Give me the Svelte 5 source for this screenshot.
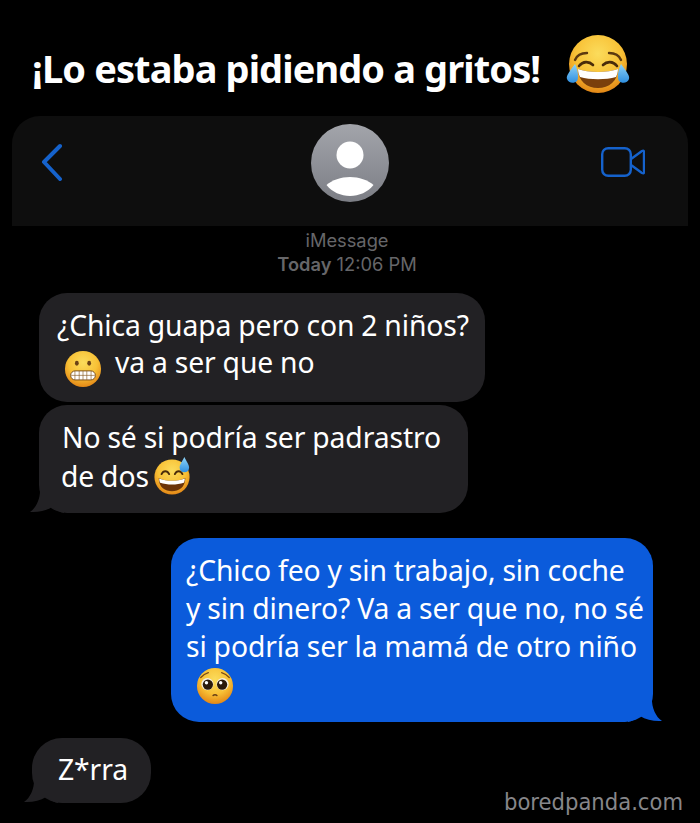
<svelte:options runes={true} />
<script>
  const bubbleTail = "M10 0 C10.500 10 6 19 0 23 C8 23.500 16 22 22 18 C25 20.500 29 23 34 24 L34 0 Z";
</script>

{#snippet defs()}
  <svg class="defs" width="0" height="0" aria-hidden="true">
    <defs>
      <radialGradient id="face" cx="50%" cy="32%" r="72%">
        <stop offset="0%" stop-color="#fbdc5c" />
        <stop offset="55%" stop-color="#f8c136" />
        <stop offset="100%" stop-color="#e07f12" />
      </radialGradient>
      <linearGradient id="tear" x1="0" y1="0" x2="0" y2="1">
        <stop offset="0%" stop-color="#8fd4f8" />
        <stop offset="100%" stop-color="#2f8fe0" />
      </linearGradient>
    </defs>
  </svg>
{/snippet}

<div class="page">
  {@render defs()}
  <header class="title">
    <h1>¡Lo estaba pidiendo a gritos!</h1>
    <svg class="e-joy" viewBox="0 0 64 60" aria-hidden="true">
      <circle cx="32" cy="29" r="29" fill="url(#face)" />
      <path d="M9 25 C11 20 15 18 21 18 M43 18 C49 18 53 20 55 25" fill="none" stroke="#5d3a10" stroke-width="2.400" stroke-linecap="round" />
      <path d="M13 31 C17 26 23 26 27 30 M37 30 C41 26 47 26 51 31" fill="none" stroke="#4a2c0a" stroke-width="2.600" stroke-linecap="round" />
      <path d="M12 34 C22 38 42 38 52 34 C52 46 43 53 32 53 C21 53 12 46 12 34 Z" fill="#7a3f0c" />
      <path d="M12 34 C22 38 42 38 52 34 C52 37 51 40 50 42 C40 45 24 45 14 42 C13 40 12 37 12 34 Z" fill="#fff" />
      <path d="M9 29 C3 37 0 41 1 44 C2 48 8 49 11 46 C13 43 12 35 9 29 Z" fill="url(#tear)" />
      <path d="M55 29 C61 37 64 41 63 44 C62 48 56 49 53 46 C51 43 52 35 55 29 Z" fill="url(#tear)" />
    </svg>
  </header>

  <section class="nav">
    <svg class="back" viewBox="0 0 24 38" aria-hidden="true">
      <path d="M20 3 L4 19 L20 36" fill="none" stroke="#1562cc" stroke-width="4" stroke-linecap="round" stroke-linejoin="round" />
    </svg>
    <svg class="avatar" viewBox="0 0 78 78" aria-hidden="true">
      <defs>
        <linearGradient id="av" x1="0" y1="0" x2="0" y2="1">
          <stop offset="0%" stop-color="#a3a5ab" />
          <stop offset="100%" stop-color="#7c7e85" />
        </linearGradient>
      </defs>
      <circle cx="39" cy="39" r="39" fill="url(#av)" />
      <circle cx="39" cy="31" r="13.500" fill="#fff" />
      <path d="M15.500 61 C21 56 30 53 39 53 C48 53 57 56 62.500 61 C57 68 48 72 39 72 C30 72 21 68 15.500 61 Z" fill="#fff" />
    </svg>
    <svg class="video" viewBox="0 0 44 30" aria-hidden="true">
      <rect x="1.200" y="1.200" width="28.600" height="27.600" rx="6" fill="none" stroke="#1562cc" stroke-width="2.400" />
      <path d="M30 12 L41 4 Q43 3 43 5 V25 Q43 27 41 26 L30 18" fill="none" stroke="#1562cc" stroke-width="2.400" stroke-linejoin="round" />
    </svg>
  </section>

  <div class="meta">
    <div class="service">iMessage</div>
    <div class="time"><b>Today</b> 12:06 PM</div>
  </div>

  <div class="thread">
    <div class="bubble in first">
      <p>¿Chica guapa pero con 2 niños?</p>
      <p class="with-emoji">
        <svg class="e-small grimace" viewBox="0 0 40 40" aria-hidden="true">
          <circle cx="20" cy="20" r="19" fill="url(#face)" />
          <ellipse cx="13.500" cy="14" rx="2" ry="2.600" fill="#6b4215" />
          <ellipse cx="26.500" cy="14" rx="2" ry="2.600" fill="#6b4215" />
          <rect x="7" y="22" width="26" height="9.500" rx="4.700" fill="#fff" stroke="#7a4e1a" stroke-width="1" />
          <path d="M7.500 26.700 H32.500 M11.500 22 V31.500 M16 22 V31.500 M20 22 V31.500 M24 22 V31.500 M28.500 22 V31.500" stroke="#8a5e28" stroke-width="0.700" />
        </svg>
        <span>va a ser que no</span>
      </p>
    </div>

    <div class="bubble in second">
      <p>No sé si podría ser padrastro</p>
      <p class="with-emoji tight">
        <span>de dos</span>
        <svg class="e-small sweat" viewBox="0 0 40 40" aria-hidden="true">
          <circle cx="20" cy="21" r="18.500" fill="url(#face)" />
          <path d="M9 18 C11 14 15 14 17 18 M23 18 C25 14 29 14 31 18" fill="none" stroke="#4a2c0a" stroke-width="2" stroke-linecap="round" />
          <path d="M6 22 C14 26 26 26 34 22 C34 32 27 36 20 36 C13 36 6 32 6 22 Z" fill="#6b3409" />
          <path d="M6.500 22.500 C14 26 26 26 33.500 22.500 C33.500 24.500 33 26 32.500 27 C25 29.500 15 29.500 7.500 27 C7 26 6.500 24.500 6.500 22.500 Z" fill="#fff" />
          <path d="M33 0 C30.500 5 28 8 28 11 C28 14 30 16 33 16 C36 16 38 14 38 11 C38 8 35.500 5 33 0 Z" fill="url(#tear)" />
        </svg>
      </p>
      <svg class="tail left" viewBox="0 0 34 24" aria-hidden="true"><path d={bubbleTail} /></svg>
    </div>

    <div class="bubble out">
      <p>¿Chico feo y sin trabajo, sin coche</p>
      <p>y sin dinero? Va a ser que no, no sé</p>
      <p>si podría ser la mamá de otro niño</p>
      <p class="with-emoji pleading">
        <svg class="e-small" viewBox="0 0 40 40" aria-hidden="true">
          <circle cx="20" cy="20" r="19" fill="url(#face)" />
          <path d="M5 11 C7 9 10 7 13 6 M35 11 C33 9 30 7 27 6" fill="none" stroke="#7a4a15" stroke-width="1.400" stroke-linecap="round" />
          <circle cx="12" cy="18" r="6.400" fill="#f5efe0" />
          <circle cx="28" cy="18" r="6.400" fill="#f5efe0" />
          <circle cx="12.500" cy="18.500" r="5.400" fill="#2b1a0c" />
          <circle cx="27.500" cy="18.500" r="5.400" fill="#2b1a0c" />
          <circle cx="11" cy="16.500" r="1.800" fill="#fff" />
          <circle cx="26" cy="16.500" r="1.800" fill="#fff" />
          <path d="M18 30 C19 28.800 21 28.800 22 30" fill="none" stroke="#6b4215" stroke-width="1.600" stroke-linecap="round" />
        </svg>
      </p>
      <svg class="tail right" viewBox="0 0 34 24" aria-hidden="true"><path d={bubbleTail} /></svg>
    </div>

    <div class="last-row">
      <div class="bubble in last">
        <p>Z*rra</p>
        <svg class="tail left" viewBox="0 0 34 24" aria-hidden="true"><path d={bubbleTail} /></svg>
      </div>
      <div class="watermark">boredpanda.com</div>
    </div>
  </div>
</div>

<style>
  :global(body) { margin: 0; background: #000; }
  .defs { position: absolute; }
  .page {
    width: 700px;
    height: 823px;
    background: #000;
    overflow: hidden;
    font-family: "Noto Sans", "Open Sans", sans-serif;
    color: #fff;
  }
  .title {
    height: 116px;
    box-sizing: border-box;
    display: flex;
    align-items: flex-start;
    padding: 44px 0 0 32px;
  }
  h1 {
    margin: 0;
    font-size: 38px;
    line-height: 48px;
    font-weight: 700;
    letter-spacing: -0.900px;
    white-space: nowrap;
  }
  .e-joy { width: 64px; height: 60px; margin: -9px 0 0 26px; }
  .nav {
    margin: 0 12px;
    height: 110px;
    background: #0e0e0e;
    border-radius: 28px 28px 0 0;
    display: grid;
    grid-template-columns: 1fr auto 1fr;
    align-items: start;
    padding: 0 43px 0 28px;
    box-sizing: border-box;
  }
  .back { width: 24px; height: 38px; margin-top: 27px; justify-self: start; }
  .avatar { width: 78px; height: 78px; margin: 8px 0 0 15px; }
  .video { width: 44px; height: 30px; margin-top: 31px; justify-self: end; }
  .meta {
    margin-top: 2px;
    height: 65px;
    text-align: center;
    font-family: Inter, "Liberation Sans", sans-serif;
    font-size: 18.300px;
    line-height: 24px;
    color: #666669;
    padding-right: 6px;
    box-sizing: border-box;
  }
  .time b { font-weight: 600; }
  .bubble {
    position: relative;
    box-sizing: border-box;
    border-radius: 28px;
    background: #222124;
    font-size: 28.300px;
    line-height: 38px;
    letter-spacing: -0.100px;
    word-spacing: -0.300px;
  }
  .bubble p { margin: 0; white-space: nowrap; }
  .in.first { margin-left: 39px; width: 446px; height: 109px; padding: 14px 0 0 18px; line-height: 37px; }
  .in.first .with-emoji { align-items: flex-start; }
  .in.second { margin: 3px 0 0 39px; width: 429px; height: 108px; padding: 13px 0 0 23px; }
  .in.second p:first-child { margin-bottom: 1px; }
  .with-emoji { display: flex; align-items: center; }
  .grimace { margin: 6px 13px 0 7px; }
  .e-small { width: 38px; height: 38px; flex: none; }
  .tight { margin-left: -1px !important; gap: 4px; }
  .out {
    margin: 25px 0 0 171px;
    width: 482px;
    height: 184px;
    padding: 13px 0 0 15px;
    background: #0b5bdb;
  }
  .pleading { padding: 2px 0 0 10px; }
  .tail { position: absolute; width: 34px; height: 24px; fill: #222124; bottom: 0; }
  .tail.left { left: -9px; }
  .tail.right { right: -9px; transform: scaleX(-1); fill: #0b5bdb; }
  .last-row { display: flex; justify-content: space-between; margin-top: 16px; }
  .in.last { margin-left: 32px; width: 119px; height: 65px; padding: 12px 0 0 26px; border-radius: 30px; }
  .in.last .tail { left: -8px; }
  .watermark {
    font-family: "DejaVu Sans", sans-serif;
    font-stretch: condensed;
    font-size: 23.500px;
    line-height: 30px;
    color: #87878a;
    margin: 49px 17px 0 0;
  }
</style>
